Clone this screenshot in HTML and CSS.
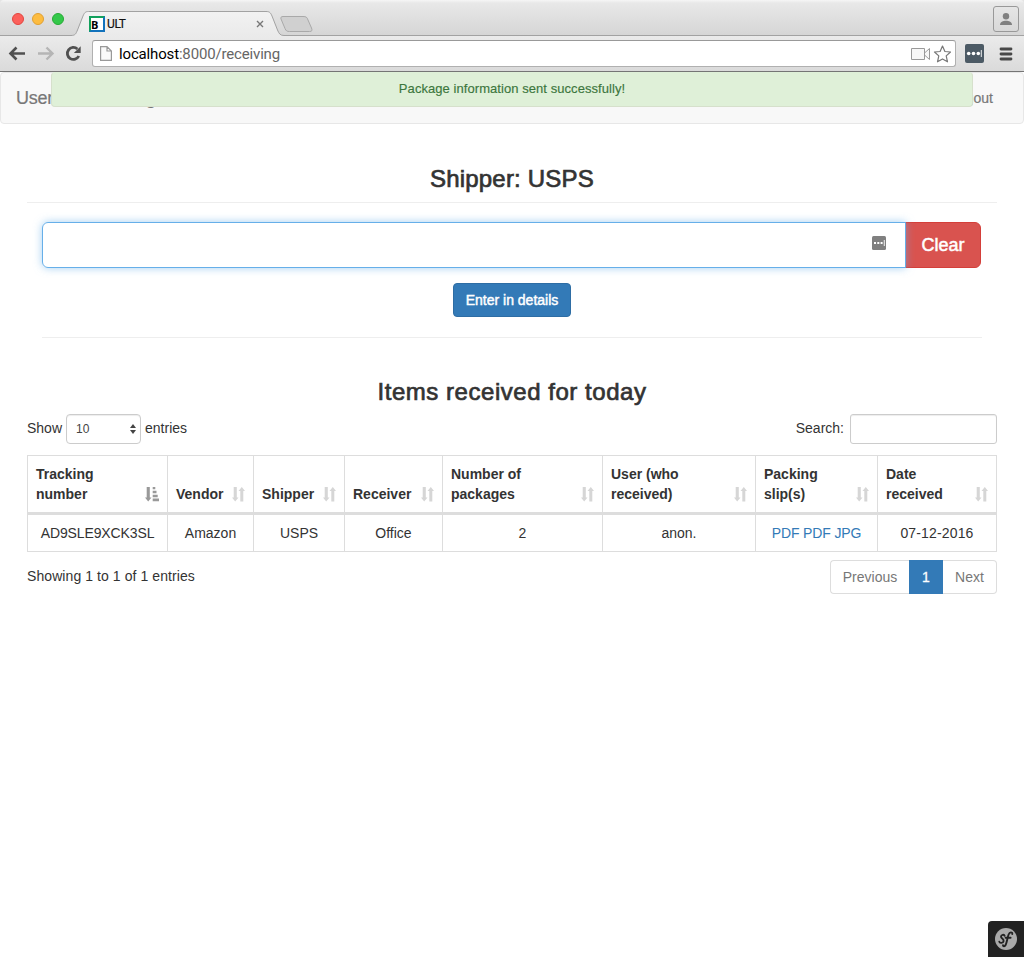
FILE: index.html
```html
<!DOCTYPE html>
<html lang="en">
<head>
<meta charset="utf-8">
<title>ULT</title>
<link rel="stylesheet" href="styles.css">
</head>
<body>
<svg class="defs" width="0" height="0">
  <symbol id="sort" viewBox="0 0 13 15"><path d="M1.700 0H4.800V10.600H6.500L3.200 14.600L0 10.600H1.700ZM8.300 14.400V4H6.500L9.800 .1L13 4H11.300V14.400Z" fill="currentColor"/></symbol>
  <symbol id="sort-asc" viewBox="0 0 14 15"><path d="M1.700 0H4.800V10.600H6.500L3.200 14.600L0 10.600H1.700ZM7.700 0H10.300V2.300H7.700ZM7.700 3.800H11.500V6.200H7.700ZM7.700 7.700H12.700V10.200H7.700ZM7.700 11.600H14V14.200H7.700Z" fill="currentColor"/></symbol>
</svg>
<header class="browser">
  <div class="tabstrip">
    <svg class="tabshape" width="1024" height="37" viewBox="0 0 1024 37">
      <defs><linearGradient id="tabfill" x1="0" y1="0" x2="0" y2="1"><stop offset="0" stop-color="#f2f2f2"/><stop offset="1" stop-color="#eaeaea"/></linearGradient></defs>
      <path d="M0 35.500H71C75.500 35.500 76 33.500 77.500 30L83 16C84.500 12.500 85.500 11.500 88.500 11.500H266C269.500 11.500 270.500 12.500 272 16L277.500 30C279 33.500 280 35.500 284 35.500H1024V37H0Z" fill="url(#tabfill)"/>
      <path d="M0 35.500H71C75.500 35.500 76 33.500 77.500 30L83 16C84.500 12.500 85.500 11.500 88.500 11.500H266C269.500 11.500 270.500 12.500 272 16L277.500 30C279 33.500 280 35.500 284 35.500H1024" fill="none" stroke="#a2a2a2"/>
      <path d="M283 16.500H303C306 16.500 307 17 308 20L311.500 28C312.500 30.500 312 31.500 309.500 31.500H289.500C287 31.500 286 31 285 28.500L281 19C280.500 17.500 281 16.500 283 16.500Z" fill="#d0d0d0" stroke="#a9a9a9"/>
    </svg>
    <div class="lights"><i class="red"></i><i class="yellow"></i><i class="green"></i></div>
    <div class="tab"><span class="favicon">B</span><span class="tabtitle">ULT</span>
      <svg width="8" height="8" viewBox="0 0 8 8"><path d="M1 1L7 7M7 1L1 7" stroke="#777" stroke-width="1.400"/></svg>
    </div>
    <div class="profile"><svg width="14" height="14" viewBox="0 0 14 14"><circle cx="7" cy="4.200" r="3.200" fill="#808080"/><path d="M1 13C1 10 4 8.700 7 8.700S13 10 13 13Z" fill="#808080"/></svg></div>
  </div>
  <div class="toolbar">
    <svg class="nav" width="84" height="20" viewBox="0 0 84 20">
      <path d="M17 9.500H3M8.500 3.500L2.500 9.500L8.500 15.500" fill="none" stroke="#505050" stroke-width="2.600"/>
      <path d="M30 9.500H44M38.500 3.500L44.500 9.500L38.500 15.500" fill="none" stroke="#b5b5b5" stroke-width="2.400"/>
      <path d="M69.400 5A6 6 0 1 0 70.800 12" fill="none" stroke="#505050" stroke-width="2.800"/><path d="M72.700 2.200V9H65.900Z" fill="#505050"/>
    </svg>
    <div class="omnibox">
      <svg width="12" height="15" viewBox="0 0 12 15"><path d="M.6 .6H7L11.400 5V14.400H.6ZM7 .6V5H11.400" fill="#fafafa" stroke="#999" stroke-width="1.200"/></svg>
      <span class="url"><b>localhost</b>:8000/receiving</span>
      <svg class="tools" width="42" height="20" viewBox="0 0 42 20">
        <path d="M2.500 4.500H15.500V15.500H2.500Z M15.500 9L20.500 4.500V15.500L15.500 11" fill="#f7f7f7" stroke="#999"/>
        <path d="M33.500 2L35.900 7.500L41.500 8L37.200 11.900L38.500 17.800L33.500 14.900L28.500 17.800L29.800 11.900L25.500 8L31.100 7.500Z" fill="#fff" stroke="#777" stroke-width="1.200" stroke-linejoin="round"/>
      </svg>
    </div>
    <svg class="ext" width="19" height="19" viewBox="0 0 19 19"><rect width="19" height="19" rx="2" fill="#4c5a65"/><circle cx="3.700" cy="9.500" r="1.800" fill="#fff"/><circle cx="8.500" cy="9.500" r="1.800" fill="#fff"/><circle cx="13.300" cy="9.500" r="1.800" fill="#fff"/><path d="M16.300 6V13" stroke="#fff" stroke-width=".9"/></svg>
    <svg class="menu" width="14" height="14" viewBox="0 0 14 14"><path d="M2 2H12M2 7H12M2 12H12" stroke="#484848" stroke-width="2.800" stroke-linecap="round"/></svg>
  </div>
</header>
<div class="page">
  <nav class="navbar"><span class="brand">User List Tracking</span><span class="logout">Logout</span></nav>
  <div class="alert"><span>Package information sent successfully!</span></div>
  <main class="container">
    <h3 class="title"><span>Shipper: USPS</span></h3>
    <section class="form">
      <div class="group">
        <div class="field"><svg width="14" height="14" viewBox="0 0 14 14"><rect width="14" height="14" rx="1.500" fill="#808080"/><path d="M2 6H4V8H2ZM5.300 6H7.300V8H5.300ZM8.600 6H10.600V8H8.600ZM11.800 4H12.700V10H11.800Z" fill="#fff"/></svg></div>
        <button class="clear"><span>Clear</span></button>
      </div>
      <button class="details"><span>Enter in details</span></button>
    </section>
    <h3 class="subtitle"><span>Items received for today</span></h3>
    <div class="controls">
      <div class="length"><span>Show</span><div class="select">10<svg width="6" height="10" viewBox="0 0 6 10"><path d="M3 0L6 4H0ZM0 6H6L3 10Z" fill="#444"/></svg></div><span>entries</span></div>
      <label class="search"><span>Search:</span><input type="text"></label>
    </div>
    <table class="items">
      <colgroup><col class="c1"><col class="c2"><col class="c3"><col class="c4"><col class="c5"><col class="c6"><col class="c7"><col class="c8"></colgroup>
      <thead><tr>
        <th><div>Tracking<br>number<svg class="asc"><use href="#sort-asc"/></svg></div></th>
        <th><div>Vendor<svg><use href="#sort"/></svg></div></th>
        <th><div>Shipper<svg><use href="#sort"/></svg></div></th>
        <th><div>Receiver<svg><use href="#sort"/></svg></div></th>
        <th><div>Number of<br>packages<svg><use href="#sort"/></svg></div></th>
        <th><div>User (who<br>received)<svg><use href="#sort"/></svg></div></th>
        <th><div>Packing<br>slip(s)<svg><use href="#sort"/></svg></div></th>
        <th><div>Date<br>received<svg><use href="#sort"/></svg></div></th>
      </tr></thead>
      <tbody><tr><td class="code">AD9SLE9XCK3SL</td><td>Amazon</td><td>USPS</td><td>Office</td><td>2</td><td>anon.</td><td class="links"><a>PDF</a> <a>PDF</a> <a>JPG</a></td><td class="date">07-12-2016</td></tr></tbody>
    </table>
    <div class="footer">
      <span class="info">Showing 1 to 1 of 1 entries</span>
      <div class="pager"><span class="prev">Previous</span><span class="current">1</span><span class="next">Next</span></div>
    </div>
  </main>
  <div class="debug"><svg width="22" height="22" viewBox="0 0 22 22"><circle cx="11" cy="11" r="11" fill="#aaa"/><path d="M9.600 7.800C9.200 6.200 6 6.500 6 8.700C6 10.600 9 10.800 8.600 13.100C8.200 15.300 4.600 15.500 4.300 13.600M17.300 6C17.400 3.700 14.700 3.700 13.600 6.500C12.400 9.500 11.900 14.500 10.600 17C9.800 18.500 8 18.700 8 17.200M10.600 9.700H15.600" fill="none" stroke="#222" stroke-width="1.900" stroke-linecap="round"/></svg></div>
</div>
</body>
</html>
```

FILE: styles.css
```css
* { box-sizing: border-box; }
body { margin: 0; width: 1024px; height: 957px; overflow: hidden; background: #fff; color: #333; font: 14px/20px "Liberation Sans", Arial, sans-serif; }
svg { display: block; flex: none; }
.defs { position: absolute; }
button { font-family: inherit; padding: 0; margin: 0; }

.browser { height: 72px; border-bottom: 1px solid #757575; background: #e4e4e4; }
.tabstrip { position: relative; height: 36px; display: flex; align-items: flex-start; background: linear-gradient(#f6f6f6 0, #e8e8e8 3px, #d5d5d5 100%); border-radius: 4px 4px 0 0; }
.tabshape { position: absolute; left: 0; top: 0; }
.lights { position: relative; display: flex; gap: 8px; padding: 13px 0 0 12px; width: 89px; }
.lights i { width: 12px; height: 12px; border-radius: 50%; border: 1px solid; }
.lights .red { background: #fc605b; border-color: #e2463f; }
.lights .yellow { background: #fdbc40; border-color: #e0a033; }
.lights .green { background: #34c84a; border-color: #27aa35; }
.tab { position: relative; width: 175px; display: flex; align-items: center; padding-top: 16px; height: 32px; }
.favicon { width: 16px; height: 16px; border: 2px solid; border-color: #12a05c #1272bc #1272bc #12a05c; background: #fff; color: #000; font: bold 11px/14px "Open Sans", sans-serif; }
.tabtitle { font: 12px/16px Roboto, sans-serif; color: #111; margin-left: 2px; letter-spacing: -.4px; flex: 1; -webkit-text-stroke: .2px #111; }
.profile { position: relative; margin: 6px 5px 0 auto; width: 26px; height: 26px; border: 1px solid #999; border-radius: 3px; display: grid; place-items: center; }
.toolbar { height: 35px; display: flex; align-items: center; background: linear-gradient(#ebebeb, #dadada); padding: 0 10px 0 8px; }
.nav { width: 84px; }
.omnibox { width: 864px; height: 27px; background: #fff; border: 1px solid #b0b0b0; border-top-color: #999; border-radius: 3px; display: flex; align-items: center; padding: 0 4px 0 7px; }
.url { margin-left: 7px; flex: 1; font: 15px/20px Roboto, sans-serif; letter-spacing: -.16px; color: #666; }
.url b { font-weight: 400; color: #000; }
.ext { margin-left: 9px; }
.menu { margin-left: 15px; }

.page { position: relative; height: 885px; }
.navbar { height: 52px; border: 1px solid #e7e7e7; border-radius: 4px; background: #f8f8f8; color: #777; display: flex; justify-content: space-between; align-items: center; padding: 0 30px 0 15px; -webkit-text-stroke: .2px #777; }
.brand { font-size: 18px; letter-spacing: -.25px; }
.alert { position: absolute; left: 51px; top: 0; width: 922px; height: 35px; border: 1px solid #d6e0cc; border-top-color: #dff0d8; border-radius: 4px; background: #dff0d8; color: #3c763d; font-size: 13px; line-height: 32px; letter-spacing: .06px; text-align: center; -webkit-text-stroke: .15px #3c763d; }
.container { padding: 0 27px; }
h3 { margin: 0; font-size: 24px; line-height: 26px; font-weight: 400; text-align: center; -webkit-text-stroke: .7px #333; }
.title { padding: 42px 0 10px; height: 79px; border-bottom: 1px solid #eee; letter-spacing: .2px; }
.form { margin: 19px 15px 0 15px; height: 116px; border-bottom: 1px solid #eee; display: flex; flex-direction: column; align-items: center; }
.group { width: 940px; height: 46px; display: flex; align-self: flex-start; }
.field { width: 864px; border: 1px solid #66afe9; border-radius: 6px 0 0 6px; box-shadow: 0 0 8px rgba(102,175,233,.6); padding: 13px 19px; display: flex; justify-content: flex-end; z-index: 1; }
.clear { width: 76px; margin-left: -1px; border: 1px solid #d43f3a; border-radius: 0 6px 6px 0; background: #d9534f; color: #fff; font-size: 18px; -webkit-text-stroke: .5px #fff; }
.details { margin-top: 15px; width: 118px; height: 34px; border: 1px solid #2e6da4; border-radius: 4px; background: #337ab7; color: #fff; font-size: 14px; -webkit-text-stroke: .45px #fff; }
.subtitle { margin-top: 41px; letter-spacing: .53px; }
.controls { margin-top: 9px; height: 30px; display: flex; justify-content: space-between; line-height: 28px; }
.length { display: flex; }
.select { width: 75px; height: 30px; margin: 0 4px 0 4px; border: 1px solid #ccc; border-radius: 4px; font-size: 12px; color: #444; padding: 0 4px 0 9px; display: flex; justify-content: space-between; align-items: center; box-shadow: inset 0 1px 1px rgba(0,0,0,.075); }
.search { display: flex; gap: 6px; }
.search input { width: 147px; height: 30px; border: 1px solid #ccc; border-radius: 3px; box-shadow: inset 0 1px 1px rgba(0,0,0,.075); }
.items { table-layout: fixed; width: 970px; margin-top: 11px; border-collapse: separate; border-spacing: 0; border: solid #ddd; border-width: 1px 0 0 1px; }
.c1 { width: 140px; } .c2 { width: 86px; } .c3 { width: 91px; } .c4 { width: 98px; }
.c5 { width: 160px; } .c6 { width: 153px; } .c7 { width: 122px; } .c8 { width: 119px; }
th { padding: 8px; border: solid #ddd; border-width: 0 1px 2px 0; text-align: left; vertical-align: bottom; }
th div { position: relative; white-space: nowrap; }
th svg { position: absolute; right: .5px; bottom: 2px; width: 13px; height: 15px; color: #d6d6d6; }
th .asc { width: 14px; color: #999; }
td { padding: 8px 0; border: solid #ddd; border-width: 1px 1px 1px 0; text-align: center; }
.code { letter-spacing: -.12px; }
.links { letter-spacing: -.15px; }
.date { letter-spacing: .15px; }
a { color: #337ab7; }
.footer { display: flex; justify-content: space-between; padding-top: 8px; }
.info { line-height: 32px; letter-spacing: .08px; }
.pager { display: flex; width: 167px; height: 34px; line-height: 32px; text-align: center; color: #777; }
.pager span { border: 1px solid #ddd; }
.pager .prev { width: 79px; border-radius: 4px 0 0 4px; border-right: 0; }
.pager .current { width: 34px; background: #337ab7; border-color: #337ab7; color: #fff; -webkit-text-stroke: .3px #fff; }
.pager .next { width: 54px; border-left: 0; border-radius: 0 4px 4px 0; }
.debug { position: absolute; right: 0; bottom: 0; width: 36px; height: 36px; background: #222; border-radius: 4px 0 0 0; display: grid; place-items: center; }
```
